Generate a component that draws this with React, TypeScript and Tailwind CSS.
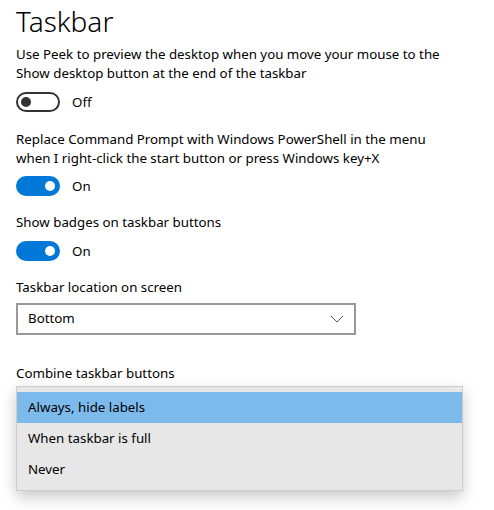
import React from 'react';

const font = { fontFamily: '"Segoe UI", "Noto Sans", "Open Sans", sans-serif' };

const Toggle = ({ on, label }: { on: boolean; label: string }) => (
  <div className="flex items-center h-[20px]">
    {on ? (
      <div className="w-[44px] h-[20px] rounded-full bg-[#0078d7] flex items-center justify-end pr-[5px]">
        <div className="w-[10px] h-[10px] rounded-full bg-white" />
      </div>
    ) : (
      <div className="w-[44px] h-[20px] rounded-full border-2 border-[#333333] flex items-center pl-[3px]">
        <div className="w-[10px] h-[10px] rounded-full bg-[#333333]" />
      </div>
    )}
    <span className="ml-[12px] text-[13.3px] leading-[20px] text-black">{label}</span>
  </div>
);

const options = ['Always, hide labels', 'When taskbar is full', 'Never'];

export default function App() {
  return (
    <div className="w-[494px] h-[510px] bg-white overflow-hidden pl-4 text-black" style={font}>
      <h1 className="text-[28px] leading-[36px] font-light pt-[3px]">Taskbar</h1>

      <p className="text-[13.3px] leading-[19px] mt-[6px]">
        Use Peek to preview the desktop when you move your mouse to the
        <br />
        Show desktop button at the end of the taskbar
      </p>
      <div className="mt-[9px]">
        <Toggle on={false} label="Off" />
      </div>

      <p className="text-[13.3px] leading-[19px] mt-[18px]">
        Replace Command Prompt with Windows PowerShell in the menu
        <br />
        when I right-click the start button or press Windows key+X
      </p>
      <div className="mt-[8px]">
        <Toggle on label="On" />
      </div>

      <p className="text-[13.3px] leading-[19px] mt-[17px]">Show badges on taskbar buttons</p>
      <div className="mt-[9px]">
        <Toggle on label="On" />
      </div>

      <p className="text-[13.3px] leading-[19px] mt-[17px]">Taskbar location on screen</p>
      <div className="mt-[6px] w-[340px] h-[32px] border-2 border-[#999999] flex items-center justify-between pl-[10px] pr-[10px]">
        <span className="text-[13.3px]">Bottom</span>
        <svg width="14" height="8" viewBox="0 0 14 8" fill="none">
          <path d="M1 1l6 6 6-6" stroke="#555" strokeWidth="1" />
        </svg>
      </div>

      <div className="relative mt-[29px]">
        <p className="text-[13.3px] leading-[19px]">Combine taskbar buttons</p>
        <div className="mt-[6px] w-[340px] h-[32px] border-2 border-[#999999]" />
        <div className="absolute left-0 top-[22px] w-[447px] bg-[#e7e7e8] border border-[#cccccc] py-[5px] shadow-[0_6px_14px_rgba(0,0,0,0.22)]">
          {options.map((o, i) => (
            <div
              key={o}
              className={`h-[31px] flex items-center pl-[11px] text-[13.3px] ${i === 0 ? 'bg-[#7cbaec]' : ''}`}
            >
              {o}
            </div>
          ))}
        </div>
      </div>
    </div>
  );
}
